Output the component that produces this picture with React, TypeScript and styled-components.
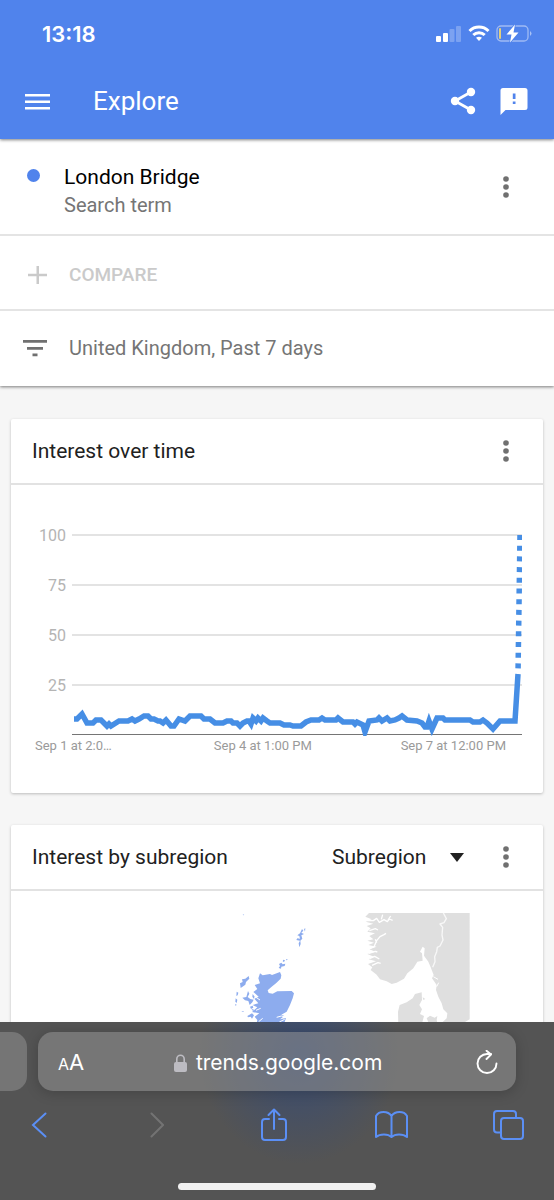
import React from 'react';
import styled, { createGlobalStyle } from 'styled-components';

const GlobalStyle = createGlobalStyle`
  *, *::before, *::after { box-sizing: border-box; }
  html, body, #root { height: 100%; }
  body {
    margin: 0;
    background: #f6f6f6;
    font-family: Roboto, 'Liberation Sans', sans-serif;
    color: #212121;
  }
  h1, h2, p { margin: 0; font-weight: 400; }
`;

const Screen = styled.div`
  height: 100vh;
  display: flex;
  flex-direction: column;
  overflow: hidden;
`;

const TopArea = styled.header`
  flex: none;
  background: #5083ec;
  color: #fff;
  box-shadow: 0 1px 3px rgba(0, 0, 0, 0.5);
  z-index: 1;
`;

const StatusBar = styled.div`
  height: 66px;
  padding: 0 22px 0 42px;
  display: flex;
  align-items: center;
  justify-content: space-between;
`;

const Clock = styled.span`
  padding-top: 2px;
  font: 600 22px/24px Inter, sans-serif;
`;

const StatusIcons = styled.div`
  display: flex;
  align-items: center;
  gap: 6px;
`;

const AppBar = styled.div`
  height: 73px;
  padding: 0 26px 4px 24px;
  display: flex;
  align-items: center;
`;

const AppTitle = styled.h1`
  flex: 1;
  padding-left: 42px;
  font-size: 26px;
  line-height: 30px;
`;

const IconButton = styled.button<{ $gap?: number }>`
  flex: none;
  display: flex;
  align-items: center;
  justify-content: center;
  margin: 0 0 0 ${(p) => p.$gap ?? 0}px;
  padding: 0;
  border: 0;
  background: none;
  color: inherit;
  cursor: pointer;
`;

const Content = styled.main`
  flex: 1;
  min-height: 0;
  overflow: hidden;
`;

const QueryPanel = styled.section`
  background: #fff;
  box-shadow: 0 1px 3px rgba(0, 0, 0, 0.5);
`;

const QueryRow = styled.div<{ $height: number }>`
  height: ${(p) => p.$height}px;
  padding: 0 44px 0 22px;
  display: flex;
  align-items: center;
  color: #757575;
  & + & { border-top: 2px solid #e4e4e4; }
`;

const TermDot = styled.span`
  align-self: flex-start;
  width: 13px;
  height: 13px;
  margin: 30px 24px 0 5px;
  border-radius: 50%;
  background: #5083ec;
`;

const TermText = styled.div`
  flex: 1;
  padding-top: 8px;
  font-size: 20px;
  line-height: 28px;
`;

const TermName = styled.p`
  font-size: 21px;
  color: #000;
`;

const RowButton = styled.button<{ $muted?: boolean }>`
  display: flex;
  align-items: center;
  gap: 20px;
  padding: ${(p) => (p.$muted ? '4px 0 0' : '0 0 2px')};
  border: 0;
  background: none;
  font-family: inherit;
  font-size: ${(p) => (p.$muted ? 19 : 20)}px;
  font-weight: ${(p) => (p.$muted ? 500 : 400)};
  line-height: 28px;
  color: ${(p) => (p.$muted ? '#cacaca' : '#757575')};
`;

const Cards = styled.div`
  padding: 33px 11px 0;
  display: flex;
  flex-direction: column;
  gap: 32px;
`;

const Card = styled.section`
  background: #fff;
  border-radius: 2px;
  box-shadow: 0 1px 3px rgba(0, 0, 0, 0.24);
`;

const CardHeader = styled.div`
  height: 66px;
  padding: 0 33px 0 21px;
  display: flex;
  align-items: center;
  border-bottom: 2px solid #e2e2e2;
  color: #757575;
`;

const CardTitle = styled.h2`
  flex: 1;
  font-size: 21px;
  line-height: 28px;
  color: #212121;
`;

const SelectBox = styled.label`
  display: flex;
  align-items: center;
  margin-right: 38px;
  color: #212121;
`;

const RegionSelect = styled.select`
  appearance: none;
  width: 118px;
  padding: 0;
  border: 0;
  background: none;
  font: 400 21px/28px Roboto, sans-serif;
  color: inherit;
`;

const ChartBody = styled.div`
  padding: 43px 21px 37px 24px;
`;

const PlotRow = styled.div`
  display: flex;
`;

const ScaleLabels = styled.div`
  width: 31px;
  display: flex;
  flex-direction: column;
  text-align: right;
  font-size: 16px;
  line-height: 16px;
  color: #b4b4b4;
`;

const ScaleLabel = styled.span`
  height: 50px;
`;

const Plot = styled.svg`
  flex: 1;
  min-width: 0;
  height: 208px;
  margin-left: 6px;
`;

const DateLabels = styled.div`
  display: grid;
  grid-template-columns: 178fr 186fr auto;
  padding-right: 16px;
  font-size: 13px;
  line-height: 20px;
  color: #9a9a9a;
`;

const MapBody = styled.div`
  padding-top: 22px;
  display: flex;
  justify-content: center;
`;

const BrowserBar = styled.footer`
  flex: none;
  height: 178px;
  overflow: hidden;
  background:
    radial-gradient(ellipse 100px 110px at 54% 32px, rgba(44, 72, 128, 0.7), transparent),
    #545454;
  z-index: 1;
`;

const TabStrip = styled.div`
  display: flex;
  gap: 11px;
  padding-top: 10px;
`;

const AddressBar = styled.div`
  flex: 1;
  height: 59px;
  padding: 2px 18px 0 20px;
  display: flex;
  align-items: center;
  border-radius: 15px;
  background: rgba(146, 146, 146, 0.55);
  box-shadow: 0 2px 14px rgba(0, 0, 0, 0.2);
  color: #fff;
  font: 400 21px/28px Inter, sans-serif;
`;

const NeighbourTab = styled.div<{ $side: 'left' | 'right' }>`
  width: 27px;
  height: 59px;
  border-radius: ${(p) => (p.$side === 'left' ? '0 15px 15px 0' : '15px 0 0 15px')};
  background: ${(p) => (p.$side === 'left' ? '#757575' : 'transparent')};
`;

const TextSize = styled.button`
  padding: 0;
  border: 0;
  background: none;
  color: inherit;
  font: 400 22px/28px Inter, sans-serif;
  small { font-size: 16px; }
`;

const Address = styled.a`
  flex: 1;
  display: flex;
  align-items: center;
  justify-content: center;
  gap: 9px;
  padding-right: 4px;
  color: inherit;
  text-decoration: none;
`;

const Toolbar = styled.nav`
  height: 68px;
  padding: 0 29px 0 22px;
  display: flex;
  align-items: center;
  justify-content: space-between;
  color: #5b8ff5;
  button { width: 33px; }
`;

const HomeIndicator = styled.div`
  width: 198px;
  height: 7px;
  margin: 24px auto 0;
  border-radius: 4px;
  background: #f1f1f1;
`;

const MoreIcon = () => (
  <svg width="8" height="24" viewBox="0 0 8 24" fill="#707070">
    <circle cx="4" cy="4" r="2.800" />
    <circle cx="4" cy="12" r="2.800" />
    <circle cx="4" cy="20" r="2.800" />
  </svg>
);

const gridLines = [6, 56, 106, 156];

const interest =
  '2,191 5,191 10,186 15,195 21,195 24,192 29,192 35,198 37,196 39,198 47,193 56,193 60,191 63,193 67,191 72,188 76,188 79,191 82,191 86,193 88,193 91,195 94,192 99,198 102,198 107,191 113,193 118,188 129,188 132,191 138,191 143,195 151,195 155,193 159,193 161,195 165,195 168,198 171,195 175,193 177,193 179,196 181,190 184,193 186,190 189,193 191,190 195,193 198,195 208,195 212,197 218,197 221,198 229,198 234,194 239,192 247,192 250,190 253,192 264,192 266,190 271,194 281,194 283,196 285,194 289,196 291,197 293,204 297,193 305,192 307,190 310,193 315,190 318,193 323,192 327,190 330,188 335,192 345,193 350,195 353,199 355,199 357,193 360,201 365,190 371,190 373,192 398,192 401,194 408,194 411,192 415,195 421,201 428,193 443,193 446,146';

const InterestPlot = () => (
  <Plot viewBox="0 0 450 208" preserveAspectRatio="none" role="img" aria-label="Interest over time">
    {gridLines.map((y) => (
      <rect key={y} x="0" y={y} width="450" height="2" fill="#e3e3e3" />
    ))}
    <rect x="0" y="206" width="450" height="1" fill="#757575" />
    <polyline points={interest} fill="none" stroke="#468ee5" strokeWidth="5.500" />
    <path d="M448 7 446 146" fill="none" stroke="#468ee5" strokeWidth="5.500" strokeDasharray="5 5.7" />
  </Plot>
);

const RegionMap = () => (
  <svg width="388" height="113" viewBox="-411 69 1164 339" role="img" aria-label="Map of subregions">
    <g fill="#dfdfdf">
      <path d="M447 69H749V388L735 396H668L680 385 682 370 670 358 665 340 655 320 648 300 650 285 636 265 641 255 632 232 625 215 612 197 614 175 608 170 600 185 606 190 608 212 592 215 580 235 562 250 552 266 530 278 515 282 500 274 480 268 470 254 452 240 457 232 444 222 468 214 446 208 462 200 442 192 466 185 448 178 470 170 445 165 462 158 442 152 460 148 448 138 465 130 442 125 452 115 440 108 460 101 437 95 455 88 436 80z" />
      <path d="M535 408 534 365 539 345 560 337 578 325 585 312 605 307 606 330 598 345 606 358 600 372 612 378 604 408z" />
      <path d="M608 322l8 5-6 3zM620 385l10-8 14 6 8-5-2 12 4 18h-24z" />
    </g>
    <g fill="none" stroke="#fff" strokeLinejoin="round">
      <path d="M670 69 679 86 672 98 660 102 668 112 666 135 669 150 660 168 652 172 650 185 644 200 645 215 638 232" strokeWidth="4" stroke="#f8f8f8" />
      <path d="M438 92h22l10-7 8 12 14-8 10 6 6-8 10 4M484 88l4-14M504 90l8-12M448 122l18-6 8 4M444 178l18-8 8-18 10-12 12-6 6-4M470 158l-4-10M450 205l14-6 14 8M446 190l20-6 6 2M456 226l18-8 8 2" strokeWidth="4" />
      <path d="M640 260l14 8M650 290l6-12" strokeWidth="3" />
    </g>
    <g fill="#8dacee">
      <path d="M120 250 128 256 150 252 156 255 180 246 184 256 182 266 168 280 155 290 143 301 146 309 158 311 172 304 215 303 222 310 218 325 210 345 200 365 184 374 193 378 180 388 198 384 190 408H108L112 390 104 380 118 370 96 366 112 352 98 345 115 340 103 326 116 320 100 306 112 297 104 285 120 280 115 265z" />
      <path d="M86 258 88 266 78 276 76 284 62 294 60 280 68 276 66 268 76 266zM50 305l5 3-2 8-4 2zM47 325l5 4-2 10-4-4zM45 342l5 2-3 4zM84 303l4 8-5 10 8 6 10 2-4 8-8 8-4-12-10-2-8-8 12-2zM98 312l6 8-3 6-4-6zM90 350l8-3 2 6-7 4zM64 366l6-3 1 3zM82 378l14-8 6 6-6 10-4-6-8 2zM94 356l10 4-5 3z" />
      <path d="M177 222 184 218 188 223 196 221 194 228 184 230 183 236 176 234 180 228zM190 209l5 2-3 5-4-2zM199 207l5 2-6 2z" />
      <path d="M246 117 250 122 244 128 252 132 244 136 247 146 241 152 242 162 238 172 236 160 240 152 229 150 232 145 240 146 238 138 232 136 240 130zM252 117l4-2-1 10zM68 72l5 3-3 1z" />
    </g>
    <path d="M120 330l-12-8M122 355l-14 6M128 385l-12 10M170 382l14-4 8 2M178 396l16-8" fill="none" stroke="#fff" strokeWidth="3" />
  </svg>
);

export default function App() {
  return (
    <Screen>
      <GlobalStyle />
      <TopArea>
        <StatusBar>
          <Clock>13:18</Clock>
          <StatusIcons>
            <svg width="26" height="17" viewBox="0 0 26 17" fill="#fff">
              <rect x="0" y="11" width="5" height="6" rx="1" />
              <rect x="7" y="8" width="5" height="9" rx="1" />
              <rect x="13.500" y="4" width="5" height="13" rx="1" opacity=".25" />
              <rect x="20" y="1" width="5" height="16" rx="1" opacity=".25" />
            </svg>
            <svg width="22" height="17" viewBox="0 0 22 17" fill="none" stroke="#fff" strokeWidth="3">
              <path d="M1.500 6a13.500 13.500 0 0 1 19 0" />
              <path d="M5.300 10a8.200 8.200 0 0 1 11.400 0" />
              <path d="M8 12.800q3-2 6 0L11 16z" fill="#fff" stroke="none" />
            </svg>
            <svg width="36" height="19" viewBox="0 0 36 19">
              <rect x="1" y="2" width="31" height="15" rx="4" fill="none" stroke="#fff" strokeOpacity=".45" strokeWidth="1.300" />
              <path d="M34 7q3 2.500 0 5z" fill="#fff" opacity=".5" />
              <rect x="3" y="4" width="2" height="11" rx="1" fill="#e3cf7c" />
              <path d="M19 .5 10.500 10.500h5L14 18.500l8.500-10h-5z" fill="#fff" stroke="#5083ec" strokeWidth="1.500" paintOrder="stroke" />
            </svg>
          </StatusIcons>
        </StatusBar>
        <AppBar>
          <IconButton aria-label="Menu">
            <svg width="27" height="18" viewBox="0 0 27 18" fill="#fff">
              <path d="M1 2h25v2.500H1zM1 8.500h25V11H1zM1 15h25v2.500H1z" />
            </svg>
          </IconButton>
          <AppTitle>Explore</AppTitle>
          <IconButton aria-label="Share">
            <svg width="26" height="28" viewBox="0 0 26 28" fill="#fff">
              <path d="M21 5 5 14l16 9" fill="none" stroke="#fff" strokeWidth="2.800" />
              <circle cx="21" cy="5" r="4.200" />
              <circle cx="5" cy="14" r="4.200" />
              <circle cx="21" cy="23" r="4.200" />
            </svg>
          </IconButton>
          <IconButton aria-label="Send feedback" $gap={24}>
            <svg width="28" height="28" viewBox="0 0 28 28">
              <path d="M3 1h22a2.500 2.500 0 0 1 2.500 2.500v17A2.500 2.500 0 0 1 25 23H5.500L.5 28V3.500A2.500 2.500 0 0 1 3 1z" fill="#fff" />
              <path d="M12.800 6.500h2.700V12h-2.700zM12.800 14.500h2.700V17h-2.700z" fill="#5083ec" />
            </svg>
          </IconButton>
        </AppBar>
      </TopArea>

      <Content>
        <QueryPanel>
          <QueryRow $height={95}>
            <TermDot />
            <TermText>
              <TermName>London Bridge</TermName>
              <p>Search term</p>
            </TermText>
            <IconButton aria-label="Term options"><MoreIcon /></IconButton>
          </QueryRow>
          <QueryRow $height={75}>
            <RowButton $muted disabled>
              <svg width="27" height="20" viewBox="0 0 27 20" fill="#cacaca">
                <path d="M14.500 1H17v7.800h8v2.500h-8V19h-2.500v-7.700H6V8.800h8.500z" />
              </svg>
              COMPARE
            </RowButton>
          </QueryRow>
          <QueryRow $height={77}>
            <RowButton>
              <svg width="27" height="18" viewBox="0 0 27 18" fill="#707070">
                <path d="M1 1h24v2.700H1zM5 8h16v2.700H5zM10.500 14.500h5v2.700h-5z" />
              </svg>
              United Kingdom, Past 7 days
            </RowButton>
          </QueryRow>
        </QueryPanel>

        <Cards>
          <Card>
            <CardHeader>
              <CardTitle>Interest over time</CardTitle>
              <IconButton aria-label="Chart options"><MoreIcon /></IconButton>
            </CardHeader>
            <ChartBody>
              <PlotRow>
                <ScaleLabels>
                  {[100, 75, 50, 25].map((n) => (
                    <ScaleLabel key={n}>{n}</ScaleLabel>
                  ))}
                </ScaleLabels>
                <InterestPlot />
              </PlotRow>
              <DateLabels>
                <span>Sep 1 at 2:0…</span>
                <span>Sep 4 at 1:00 PM</span>
                <span>Sep 7 at 12:00 PM</span>
              </DateLabels>
            </ChartBody>
          </Card>

          <Card>
            <CardHeader>
              <CardTitle>Interest by subregion</CardTitle>
              <SelectBox>
                <RegionSelect aria-label="Region level">
                  <option>Subregion</option>
                </RegionSelect>
                <svg width="14" height="9" viewBox="0 0 14 9" fill="#212121">
                  <path d="M0 0h14L7 9z" />
                </svg>
              </SelectBox>
              <IconButton aria-label="Map options"><MoreIcon /></IconButton>
            </CardHeader>
            <MapBody>
              <RegionMap />
            </MapBody>
          </Card>
        </Cards>
      </Content>

      <BrowserBar>
        <TabStrip>
          <NeighbourTab $side="left" />
          <AddressBar>
            <TextSize aria-label="Page settings"><small>A</small>A</TextSize>
            <Address href="#">
              <svg width="13" height="18" viewBox="0 0 13 18">
                <rect x="0" y="8" width="13" height="10" rx="2" fill="#bdbcc2" />
                <path d="M2.800 9V5a3.700 3.700 0 0 1 7.400 0v4" fill="none" stroke="#bdbcc2" strokeWidth="1.600" />
              </svg>
              trends.google.com
            </Address>
            <IconButton aria-label="Reload">
              <svg width="22" height="26" viewBox="0 0 22 26" fill="none" stroke="#fff" strokeWidth="1.900" strokeLinecap="round" strokeLinejoin="round">
                <path d="M20.500 13.500A9.500 9.500 0 1 1 11 4h4" />
                <path d="M10.500 .8 15 4.500 10.500 9" />
              </svg>
            </IconButton>
          </AddressBar>
          <NeighbourTab $side="right" />
        </TabStrip>
        <Toolbar>
          <IconButton aria-label="Back">
            <svg width="16" height="26" viewBox="0 0 16 26" fill="none" stroke="currentColor" strokeWidth="2" strokeLinecap="round">
              <path d="M14.500 1.500 2 13l12.500 11.500" />
            </svg>
          </IconButton>
          <IconButton aria-label="Forward">
            <svg width="16" height="26" viewBox="0 0 16 26" fill="none" stroke="#737373" strokeWidth="2" strokeLinecap="round">
              <path d="M3.500 1.500 15 13 3.500 24.500" />
            </svg>
          </IconButton>
          <IconButton aria-label="Share page">
            <svg width="26" height="34" viewBox="0 0 26 34" fill="none" stroke="currentColor" strokeWidth="2" strokeLinecap="round" strokeLinejoin="round">
              <path d="M8 11H4a3 3 0 0 0-3 3v15a3 3 0 0 0 3 3h18a3 3 0 0 0 3-3V14a3 3 0 0 0-3-3h-4M13 21V2M7.500 7 13 1.500 18.500 7" />
            </svg>
          </IconButton>
          <IconButton aria-label="Bookmarks">
            <svg width="33" height="28" viewBox="0 0 33 28" fill="none" stroke="currentColor" strokeWidth="2" strokeLinejoin="round">
              <path d="M16.500 5C13-.3 4-.3 1 5v21c4-3.500 12-3.500 15.500 0C20 22.500 28 22.500 32 26V5C29-.3 20-.3 16.500 5zM16.500 5v21" />
            </svg>
          </IconButton>
          <IconButton aria-label="Tabs">
            <svg width="31" height="30" viewBox="0 0 31 30" fill="none" stroke="currentColor" strokeWidth="2">
              <rect x="8" y="8" width="22" height="21" rx="3" />
              <path d="M8 22.500H4a3 3 0 0 1-3-3V4a3 3 0 0 1 3-3h16a3 3 0 0 1 3 3v4" />
            </svg>
          </IconButton>
        </Toolbar>
        <HomeIndicator />
      </BrowserBar>
    </Screen>
  );
}
